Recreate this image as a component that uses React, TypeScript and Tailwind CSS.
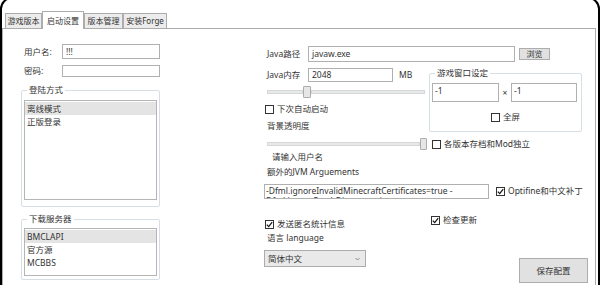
import React from "react";

// small WPF-ish checkbox
function Check({ checked = false }: { checked?: boolean }) {
  return (
    <span className="w-[9px] h-[9px] border border-[#333] bg-white flex items-center justify-center shrink-0">
      {checked && (
        <svg width="7" height="7" viewBox="0 0 7 7">
          <path d="M0.8 3.6 L2.7 5.6 L6.2 1.1" stroke="#1a1a1a" strokeWidth="1.3" fill="none" />
        </svg>
      )}
    </span>
  );
}

function Tab({ label, active = false }: { label: string; active?: boolean }) {
  if (active) {
    return (
      <div className="relative z-10 h-[18px] -mb-px w-[42px] border border-b-0 border-[#acacac] bg-white flex items-center justify-center whitespace-nowrap text-[8px]">
        {label}
      </div>
    );
  }
  return (
    <div className="h-[15px] border border-b-0 border-[#acacac] bg-[#ececec] flex items-center justify-center whitespace-nowrap text-[8px]">
      {label}
    </div>
  );
}

function ListItem({ label, selected = false }: { label: string; selected?: boolean }) {
  return (
    <div className={`h-[13px] leading-[13px] pl-[2px] ${selected ? "bg-[#e4e4e4]" : ""}`}>{label}</div>
  );
}

export default function App() {
  return (
    <div className="w-[600px] h-[285px] overflow-hidden bg-white font-['Noto_Sans','Noto_Sans_CJK_SC',sans-serif] text-[8.5px] leading-[12px] text-[#333]">
      <div className="-mt-[3px] h-[300px] border-2 border-black rounded-[12px] bg-white flex flex-col">
        {/* tab strip */}
        <div className="mt-[12px] ml-[3px] h-[17px] flex items-end">
          <div className="w-[37px]">
            <Tab label="游戏版本" />
          </div>
          <Tab label="启动设置" active />
          <div className="w-[39px]">
            <Tab label="版本管理" />
          </div>
          <div className="w-[44px]">
            <Tab label="安装Forge" />
          </div>
        </div>

        {/* tab page */}
        <div className="flex-1 mr-[2px] border border-b-0 border-[#acacac] flex">
          {/* left column */}
          <div className="ml-[18px] w-[139px] flex flex-col">
            <div className="mt-[15px] h-[15px] flex items-center">
              <span className="w-[41px] pl-[3px]">用户名:</span>
              <div className="w-[98px] h-[15px] border border-[#b0b0b0] pl-[3px] flex items-center">!!!</div>
            </div>
            <div className="mt-[6px] h-[12px] flex items-center">
              <span className="w-[41px] pl-[3px]">密码:</span>
              <div className="w-[98px] h-[12px] border border-[#b0b0b0]" />
            </div>

            <fieldset className="mt-[7px] w-[139px] border border-[#d5dfe5] rounded-[2px] px-[2px] pb-[6px]">
              <legend className="ml-[3px] px-[2px] leading-[12px]">登陆方式</legend>
              <div className="mt-[4px] h-[100px] border border-[#b5b5b5] py-px">
                <ListItem label="离线模式" selected />
                <ListItem label="正版登录" />
              </div>
            </fieldset>

            <fieldset className="mt-[6px] w-[139px] border border-[#d5dfe5] rounded-[2px] px-[2px] pb-[3px]">
              <legend className="ml-[3px] px-[2px] leading-[12px]">下载服务器</legend>
              <div className="mt-[3px] h-[48px] border border-[#b5b5b5] py-px">
                <ListItem label="BMCLAPI" selected />
                <ListItem label="官方源" />
                <ListItem label="MCBBS" />
              </div>
            </fieldset>
          </div>

          {/* right column */}
          <div className="ml-[104px] w-[324px] flex flex-col">
            <div className="mt-[17px] h-[16px] flex items-center">
              <span className="w-[44px] pl-[3px]">Java路径</span>
              <div className="w-[207px] h-[16px] border border-[#b0b0b0] pl-[3px] flex items-center">javaw.exe</div>
              <div className="ml-[4px] w-[31px] h-[12px] border border-[#adadad] bg-[#e1e1e1] flex items-center justify-center text-[8px]">
                浏览
              </div>
            </div>

            <div className="mt-[6px] flex">
              <div className="w-[162px] flex flex-col">
                <div className="h-[14px] flex items-center">
                  <span className="w-[44px] pl-[3px]">Java内存</span>
                  <div className="w-[85px] h-[14px] border border-[#b0b0b0] pl-[3px] flex items-center">2048</div>
                  <span className="ml-[6px]">MB</span>
                </div>
                <div className="mt-[4px] ml-[3px] h-[12px] flex items-center">
                  <div className="w-[36px] h-[4px] bg-[#e7eaea] border border-[#d6d6d6]" />
                  <div className="w-[8px] h-[12px] bg-[#e6e6e6] border border-[#acacac] rounded-[1px]" />
                  <div className="w-[114px] h-[4px] bg-[#e7eaea] border border-[#d6d6d6]" />
                </div>
                <div className="mt-[5px] ml-[1px] h-[12px] flex items-center gap-[3px]">
                  <Check />
                  <span>下次自动启动</span>
                </div>
                <div className="mt-[5px] ml-[3px]">背景透明度</div>
              </div>

              <fieldset className="ml-[3px] -mt-[1px] w-[153px] border border-[#d5dfe5] rounded-[2px] px-[2px] pb-[4px]">
                <legend className="ml-[3px] px-[2px] leading-[12px]">游戏窗口设定</legend>
                <div className="mt-[4px] flex items-center">
                  <div className="w-[67px] h-[19px] border border-[#b0b0b0] pl-[2px] pt-[1px]">-1</div>
                  <span className="w-[12px] text-center">×</span>
                  <div className="w-[66px] h-[19px] border border-[#b0b0b0] pl-[2px] pt-[1px]">-1</div>
                </div>
                <div className="mt-[9px] flex items-center justify-center gap-[3px]">
                  <Check />
                  <span>全屏</span>
                </div>
              </fieldset>
            </div>

            <div className="mt-[6px] h-[12px] flex items-center">
              <div className="ml-[3px] w-[160px] h-[12px] flex items-center">
                <div className="w-[153px] h-[4px] bg-[#e7eaea] border border-[#d6d6d6]" />
                <div className="w-[7px] h-[12px] bg-[#e6e6e6] border border-[#acacac] rounded-[1px]" />
              </div>
              <div className="ml-[5px] flex items-center gap-[3px]">
                <Check />
                <span>各版本存档和Mod独立</span>
              </div>
            </div>

            <div className="mt-[1px] ml-[8px]">请输入用户名</div>
            <div className="mt-[3px] ml-[3px]">额外的JVM Arguements</div>

            <div className="mt-[6px] flex items-start">
              <div className="w-[225px] h-[15px] border border-[#b0b0b0] overflow-hidden leading-[10px] pt-px pl-px whitespace-nowrap">
                <div>-Dfml.ignoreInvalidMinecraftCertificates=true -</div>
                <div>Dfml.ignorePatchDiscrepancies=true</div>
              </div>
              <div className="ml-[7px] mt-px flex items-center gap-[3px]">
                <Check checked />
                <span>Optifine和中文补丁</span>
              </div>
            </div>

            <div className="mt-[15px] flex items-start">
              <div className="mt-[4px] ml-[1px] w-[166px] flex items-center gap-[3px]">
                <Check checked />
                <span>发送匿名统计信息</span>
              </div>
              <div className="flex items-center gap-[3px]">
                <Check checked />
                <span>检查更新</span>
              </div>
            </div>

            <div className="mt-[2px] ml-[3px]">语言 language</div>

            <div className="flex items-start">
              <div className="mt-[6px] w-[102px] h-[17px] border border-[#acacac] bg-[#e9e9e9] pl-[3px] pr-[5px] flex items-center justify-between">
                <span>简体中文</span>
                <svg width="5" height="4" viewBox="0 0 5 4">
                  <path d="M0.5 1 L2.5 3 L4.5 1" stroke="#777" strokeWidth="0.8" fill="none" />
                </svg>
              </div>
              <div className="ml-auto mt-[14px] w-[69px] h-[25px] border border-[#adadad] bg-[#e1e1e1] flex items-center justify-center">
                保存配置
              </div>
            </div>
          </div>
        </div>
      </div>
    </div>
  );
}
